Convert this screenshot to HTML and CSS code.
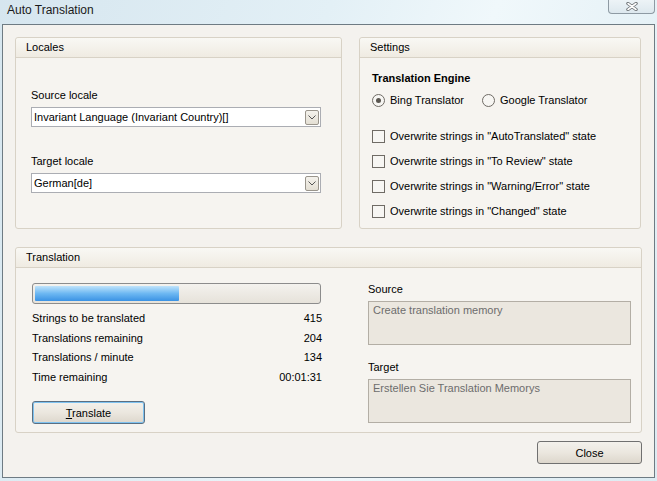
FILE: index.html
```html
<!DOCTYPE html>
<html>
<head>
<meta charset="utf-8">
<link rel="stylesheet" href="styles.css">
</head>
<body>
<div class="titlebar">
  <span class="title">Auto Translation</span>
  <span class="xbtn"><svg width="12" height="9" viewBox="0 0 12 9"><path d="M2 1.5 L10 7.5 M10 1.5 L2 7.5" stroke="#6a6f73" stroke-width="3.4" stroke-linecap="round"/><path d="M2 1.5 L10 7.5 M10 1.5 L2 7.5" stroke="#fdfdfd" stroke-width="1.6" stroke-linecap="round"/></svg></span>
</div>
<div class="window">
  <div class="client">
    <div class="toprow">
      <section class="panel locales">
        <div class="phead">Locales</div>
        <div class="pbody lbody">
          <div class="lbl">Source locale</div>
          <div class="combo"><span>Invariant Language (Invariant Country)[]</span><span class="drop"><svg width="8" height="5" viewBox="0 0 8 5"><path d="M0.5 0.5 L4 4 L7.5 0.5" fill="none" stroke="#555" stroke-width="1"/></svg></span></div>
          <div class="lbl second">Target locale</div>
          <div class="combo"><span>German[de]</span><span class="drop"><svg width="8" height="5" viewBox="0 0 8 5"><path d="M0.5 0.5 L4 4 L7.5 0.5" fill="none" stroke="#555" stroke-width="1"/></svg></span></div>
        </div>
      </section>
      <section class="panel settings">
        <div class="phead">Settings</div>
        <div class="pbody sbody">
          <div class="engine">Translation Engine</div>
          <div class="radios">
            <label class="opt"><span class="radio on"></span>Bing Translator</label>
            <label class="opt"><span class="radio"></span>Google Translator</label>
          </div>
          <div class="checks">
            <label class="opt"><span class="check"></span>Overwrite strings in "AutoTranslated" state</label>
            <label class="opt"><span class="check"></span>Overwrite strings in "To Review" state</label>
            <label class="opt"><span class="check"></span>Overwrite strings in "Warning/Error" state</label>
            <label class="opt"><span class="check"></span>Overwrite strings in "Changed" state</label>
          </div>
        </div>
      </section>
    </div>
    <section class="panel translation">
      <div class="phead">Translation</div>
      <div class="pbody tbody">
        <div class="tleft">
          <div class="progress"><div class="fill" style="width:144px"></div></div>
          <div class="stats">
            <div class="stat"><span>Strings to be translated</span><span>415</span></div>
            <div class="stat"><span>Translations remaining</span><span>204</span></div>
            <div class="stat"><span>Translations / minute</span><span>134</span></div>
            <div class="stat"><span>Time remaining</span><span>00:01:31</span></div>
          </div>
          <button class="btn default"><u>T</u>ranslate</button>
        </div>
        <div class="tright">
          <div class="lbl">Source</div>
          <div class="tbox">Create translation memory</div>
          <div class="lbl second">Target</div>
          <div class="tbox">Erstellen Sie Translation Memorys</div>
        </div>
      </div>
    </section>
    <div class="footer">
      <button class="btn close">Close</button>
    </div>
  </div>
</div>
</body>
</html>
```

FILE: styles.css
```css
html, body {
  margin: 0;
  padding: 0;
}
body {
  width: 657px;
  height: 481px;
  overflow: hidden;
  background: linear-gradient(110deg, #d6e6ef 0%, #e3f0f6 40%, #f0f8fb 60%, #dcebf2 100%);
  font-family: "Liberation Sans", Arial, sans-serif;
  font-size: 11px;
  color: #000;
}
.titlebar {
  height: 24px;
  position: relative;
}
.title {
  position: absolute;
  left: 7px;
  top: 3px;
  font-size: 12px;
  color: #1a1a1a;
}
.xbtn {
  position: absolute;
  left: 608px;
  top: -1px;
  width: 45px;
  height: 14px;
  border: 1px solid #8e9aa3;
  border-top: none;
  border-radius: 0 0 4px 4px;
  background: linear-gradient(#eef4f7, #dde8ee);
  display: flex;
  align-items: center;
  justify-content: center;
}
.window {
  margin-left: 2px;
  width: 651px;
  height: 452px;
  border: 1px solid #6e7b83;
  background: #f4f2ee;
}
.client {
  padding: 12px 12px 0 12px;
  display: flex;
  flex-direction: column;
}
.toprow {
  display: grid;
  grid-template-columns: 327px 282px;
  column-gap: 17px;
  height: 192px;
}
.panel {
  border: 1px solid #d8d2c6;
  border-radius: 3px;
  background: #f6f4f0;
  box-sizing: border-box;
}
.phead {
  height: 19px;
  line-height: 19px;
  padding-left: 10px;
  border-bottom: 1px solid #d8d2c6;
  background: linear-gradient(#f9f8f4, #efebe2);
  border-radius: 3px 3px 0 0;
}
.pbody {
  box-sizing: border-box;
}
.lbody {
  padding: 31px 0 0 15px;
}
.lbl {
  height: 13px;
  line-height: 13px;
  margin-bottom: 5px;
}
.lbl.second {
  margin-top: 28px;
}
.combo {
  width: 290px;
  height: 20px;
  box-sizing: border-box;
  border: 1px solid #abadb3;
  background: #fff;
  display: flex;
  align-items: center;
  justify-content: space-between;
  padding-left: 2px;
}
.drop {
  width: 14px;
  height: 15px;
  margin-right: 1px;
  border: 1px solid #9a958c;
  border-radius: 2px;
  background: linear-gradient(#f4f2ec, #e4dfd4);
  display: flex;
  align-items: center;
  justify-content: center;
  box-sizing: border-box;
}
.sbody {
  padding: 14px 0 0 12px;
}
.engine {
  font-weight: bold;
  height: 13px;
  line-height: 13px;
}
.radios {
  display: flex;
  gap: 18px;
  margin-top: 7px;
}
.opt {
  display: flex;
  align-items: center;
  height: 16px;
}
.radio {
  width: 13px;
  height: 13px;
  box-sizing: border-box;
  border: 1px solid #6f6b65;
  border-radius: 50%;
  margin-right: 5px;
  background: #f7f6f3;
  position: relative;
}
.radio.on::after {
  content: "";
  position: absolute;
  left: 3px;
  top: 3px;
  width: 5px;
  height: 5px;
  border-radius: 50%;
  background: #5a5650;
}
.checks {
  margin-top: 20px;
  display: flex;
  flex-direction: column;
  gap: 9px;
}
.check {
  width: 13px;
  height: 13px;
  box-sizing: border-box;
  border: 1px solid #6f6b65;
  margin-right: 5px;
  background: #f7f6f3;
}
.translation {
  margin-top: 18px;
  height: 186px;
}
.tbody {
  display: grid;
  grid-template-columns: 290px 263px;
  column-gap: 46px;
  padding: 0 0 0 16px;
}
.tleft {
  padding-top: 15px;
}
.progress {
  width: 289px;
  height: 21px;
  box-sizing: border-box;
  border: 1px solid #8c8c8c;
  border-radius: 3px;
  background: linear-gradient(#f4f2ee, #e6e2da);
  padding: 2px;
}
.fill {
  height: 100%;
  background: linear-gradient(#bfe3fb, #6db8f2 50%, #3a92e4);
  border-radius: 1px;
}
.stats {
  margin-top: 5px;
  width: 290px;
}
.stat {
  display: flex;
  justify-content: space-between;
  height: 19.5px;
  line-height: 19.5px;
}
.btn {
  font-family: inherit;
  font-size: 11px;
  color: #000;
  border: 1px solid #707070;
  border-radius: 3px;
  background: linear-gradient(#f3f1ec 0%, #ebe7df 50%, #ddd7cc 100%);
  padding: 0;
  box-sizing: border-box;
}
.btn.default {
  margin-top: 14px;
  width: 113px;
  height: 23px;
  border-color: #5a6f82;
  box-shadow: inset 0 0 0 1px #7ec2f0;
}
.tright {
  padding-top: 15px;
}
.tbox {
  width: 263px;
  height: 44px;
  box-sizing: border-box;
  border: 1px solid #b3aea5;
  background: #ebe7df;
  color: #6d6d6d;
  padding: 2px 4px;
}
.tright .lbl.second {
  margin-top: 16px;
}
.footer {
  display: flex;
  justify-content: flex-end;
  margin-top: 8px;
}
.btn.close {
  width: 105px;
  height: 23px;
}
```
